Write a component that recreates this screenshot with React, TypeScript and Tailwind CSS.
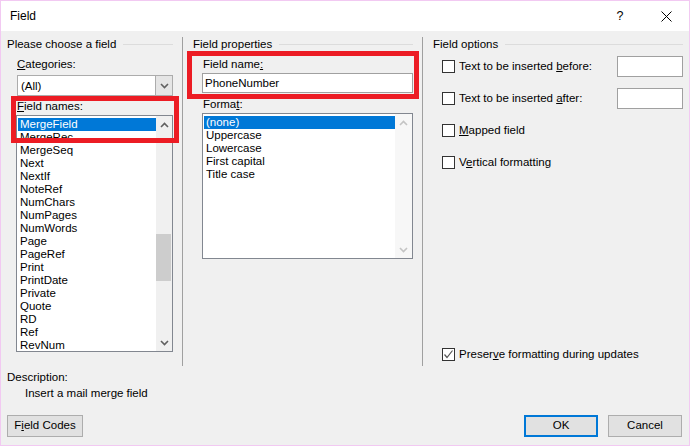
const fieldNames = [
  "MergeField",
  "MergeRec",
  "MergeSeq",
  "Next",
  "NextIf",
  "NoteRef",
  "NumChars",
  "NumPages",
  "NumWords",
  "Page",
  "PageRef",
  "Print",
  "PrintDate",
  "Private",
  "Quote",
  "RD",
  "Ref",
  "RevNum",
];

const formats = ["(none)", "Uppercase", "Lowercase", "First capital", "Title case"];

function Chevron({ up, color }: { up?: boolean; color: string }) {
  return (
    <svg width="9" height="6" viewBox="0 0 9 6">
      <polyline
        points={up ? "1,5 4.5,1.5 8,5" : "1,1 4.5,4.5 8,1"}
        fill="none"
        stroke={color}
        strokeWidth="1.6"
      />
    </svg>
  );
}

function GroupTitle({ children }: { children: string }) {
  return (
    <div className="flex h-[14px] items-center gap-[7px] leading-[14px]">
      <span>{children}</span>
      <div className="h-px flex-1 bg-[#dcdcdc]" />
    </div>
  );
}

function CheckBox({ checked }: { checked?: boolean }) {
  return (
    <div className="flex h-[13px] w-[13px] shrink-0 items-center justify-center border border-[#333] bg-white">
      {checked && (
        <svg width="11" height="11" viewBox="0 0 11 11">
          <polyline points="1.5,5.5 4,8.5 9.5,1.5" fill="none" stroke="#555" strokeWidth="1.2" />
        </svg>
      )}
    </div>
  );
}

export default function App() {
  return (
    <div className="relative flex h-[446px] w-[690px] flex-col border border-[#f2c9f2] bg-[#f0f0f0] font-['Liberation_Sans',Arial,sans-serif] text-[11.5px] text-black">
      {/* title bar */}
      <div className="flex h-[30px] shrink-0 items-center bg-white">
        <span className="pl-[9px] text-[12px]">Field</span>
        <div className="ml-auto flex h-full">
          <div className="flex w-[46px] items-center justify-center text-[12.5px]">?</div>
          <div className="flex w-[46px] items-center justify-center">
            <svg width="11" height="11" viewBox="0 0 11 11">
              <path d="M0.5 0.5 L10.5 10.5 M10.5 0.5 L0.5 10.5" stroke="#000" strokeWidth="1" />
            </svg>
          </div>
        </div>
      </div>

      {/* columns */}
      <div className="mt-[6px] flex h-[329px] shrink-0">
        {/* left */}
        <div className="flex w-[182px] flex-col border-r border-[#a0a0a0] pl-[6px] pr-[9px]">
          <GroupTitle>Please choose a field</GroupTitle>
          <div className="mt-[6px] h-[14px] pl-[10px] leading-[14px]">
            <span className="underline">C</span>ategories:
          </div>
          <div className="ml-[10px] mt-[4px] flex h-[21px] border border-[#acacac] bg-white">
            <div className="flex-1 pl-[3px] leading-[20px]">(All)</div>
            <div className="flex w-[17px] items-center justify-center border-l border-[#acacac] bg-[#e5e5e5]">
              <Chevron color="#606060" />
            </div>
          </div>
          <div className="mt-[3px] h-[14px] pl-[10px] leading-[14px]">
            <span className="underline">F</span>ield names:
          </div>
          <div className="ml-[9px] mt-[2px] flex h-[237px] border border-[#828790] bg-white">
            <div className="flex-1 overflow-hidden pl-px pt-[2px]">
              {fieldNames.map((n, i) => (
                <div
                  key={n}
                  className={`h-[13px] pl-[2px] leading-[13px] ${i === 0 ? "bg-[#0078d7] text-white" : ""}`}
                >
                  {n}
                </div>
              ))}
            </div>
            <div className="flex w-[16px] flex-col bg-[#f0f0f0]">
              <div className="flex h-[17px] items-center justify-center">
                <Chevron up color="#606060" />
              </div>
              <div className="relative flex-1">
                <div className="absolute left-0 right-px top-[101px] h-[47px] bg-[#cdcdcd]" />
              </div>
              <div className="flex h-[17px] items-center justify-center">
                <Chevron color="#606060" />
              </div>
            </div>
          </div>
        </div>

        {/* middle */}
        <div className="flex w-[240px] flex-col border-r border-[#a0a0a0] pl-[10px] pr-[9px]">
          <GroupTitle>Field properties</GroupTitle>
          <div className="mt-[6px] h-[14px] pl-[10px] leading-[14px]">
            Field name<span className="underline">:</span>
          </div>
          <div className="ml-[9px] mt-[2px] h-[20px] border border-[#a0a0a0] bg-white pl-[2px] leading-[19px]">
            PhoneNumber
          </div>
          <div className="mt-[4px] h-[14px] pl-[10px] leading-[14px]">
            Forma<span className="underline">t</span>:
          </div>
          <div className="ml-[9px] mt-[2px] flex h-[146px] border border-[#828790] bg-white">
            <div className="flex-1 pl-px pt-[2px]">
              {formats.map((f, i) => (
                <div
                  key={f}
                  className={`h-[13px] pl-[2px] leading-[13px] ${i === 0 ? "bg-[#0078d7] text-white" : ""}`}
                >
                  {f}
                </div>
              ))}
            </div>
            <div className="flex w-[17px] flex-col justify-between bg-[#f7f7f7]">
              <div className="flex h-[17px] items-center justify-center">
                <Chevron up color="#c4c4c4" />
              </div>
              <div className="flex h-[17px] items-center justify-center">
                <Chevron color="#c4c4c4" />
              </div>
            </div>
          </div>
        </div>

        {/* right */}
        <div className="flex flex-1 flex-col pl-[10px] pr-[6px]">
          <GroupTitle>Field options</GroupTitle>
          <div className="mt-[5px] flex flex-col gap-[11px] pl-[9px]">
            <div className="flex h-[21px] items-center">
              <CheckBox />
              <span className="ml-[4px]">
                Text to be inserted <span className="underline">b</span>efore:
              </span>
              <div className="ml-auto h-[21px] w-[66px] border border-[#a0a0a0] bg-white" />
            </div>
            <div className="flex h-[21px] items-center">
              <CheckBox />
              <span className="ml-[4px]">
                Text to be inserted <span className="underline">a</span>fter:
              </span>
              <div className="ml-auto h-[21px] w-[66px] border border-[#a0a0a0] bg-white" />
            </div>
            <div className="flex h-[21px] items-center">
              <CheckBox />
              <span className="ml-[4px]">
                <span className="underline">M</span>apped field
              </span>
            </div>
            <div className="flex h-[21px] items-center">
              <CheckBox />
              <span className="ml-[4px]">
                V<span className="underline">e</span>rtical formatting
              </span>
            </div>
          </div>
          <div className="mb-[5px] mt-auto flex h-[13px] items-center pl-[9px]">
            <CheckBox checked />
            <span className="ml-[4px]">
              Preser<span className="underline">v</span>e formatting during updates
            </span>
          </div>
        </div>
      </div>

      {/* description */}
      <div className="mt-[4px] h-[14px] pl-[6px] leading-[14px]">Description:</div>
      <div className="mt-[2px] h-[14px] pl-[24px] leading-[14px]">Insert a mail merge field</div>

      {/* buttons */}
      <div className="mt-[15px] flex pl-[6px] pr-[7px]">
        <button className="h-[22px] w-[76px] border border-[#adadad] bg-[#e1e1e1]">
          F<span className="underline">i</span>eld Codes
        </button>
        <button className="ml-auto h-[22px] w-[74px] border-2 border-[#0078d7] bg-[#e1e1e1]">OK</button>
        <button className="ml-[10px] h-[22px] w-[74px] border border-[#adadad] bg-[#e1e1e1]">Cancel</button>
      </div>

      {/* red annotation boxes */}
      <div className="absolute left-[10px] top-[95px] h-[47px] w-[168px] border-[5px] border-[#ec1c24]" />
      <div className="absolute left-[186px] top-[50px] h-[48px] w-[232px] border-[5px] border-[#ec1c24]" />
    </div>
  );
}
